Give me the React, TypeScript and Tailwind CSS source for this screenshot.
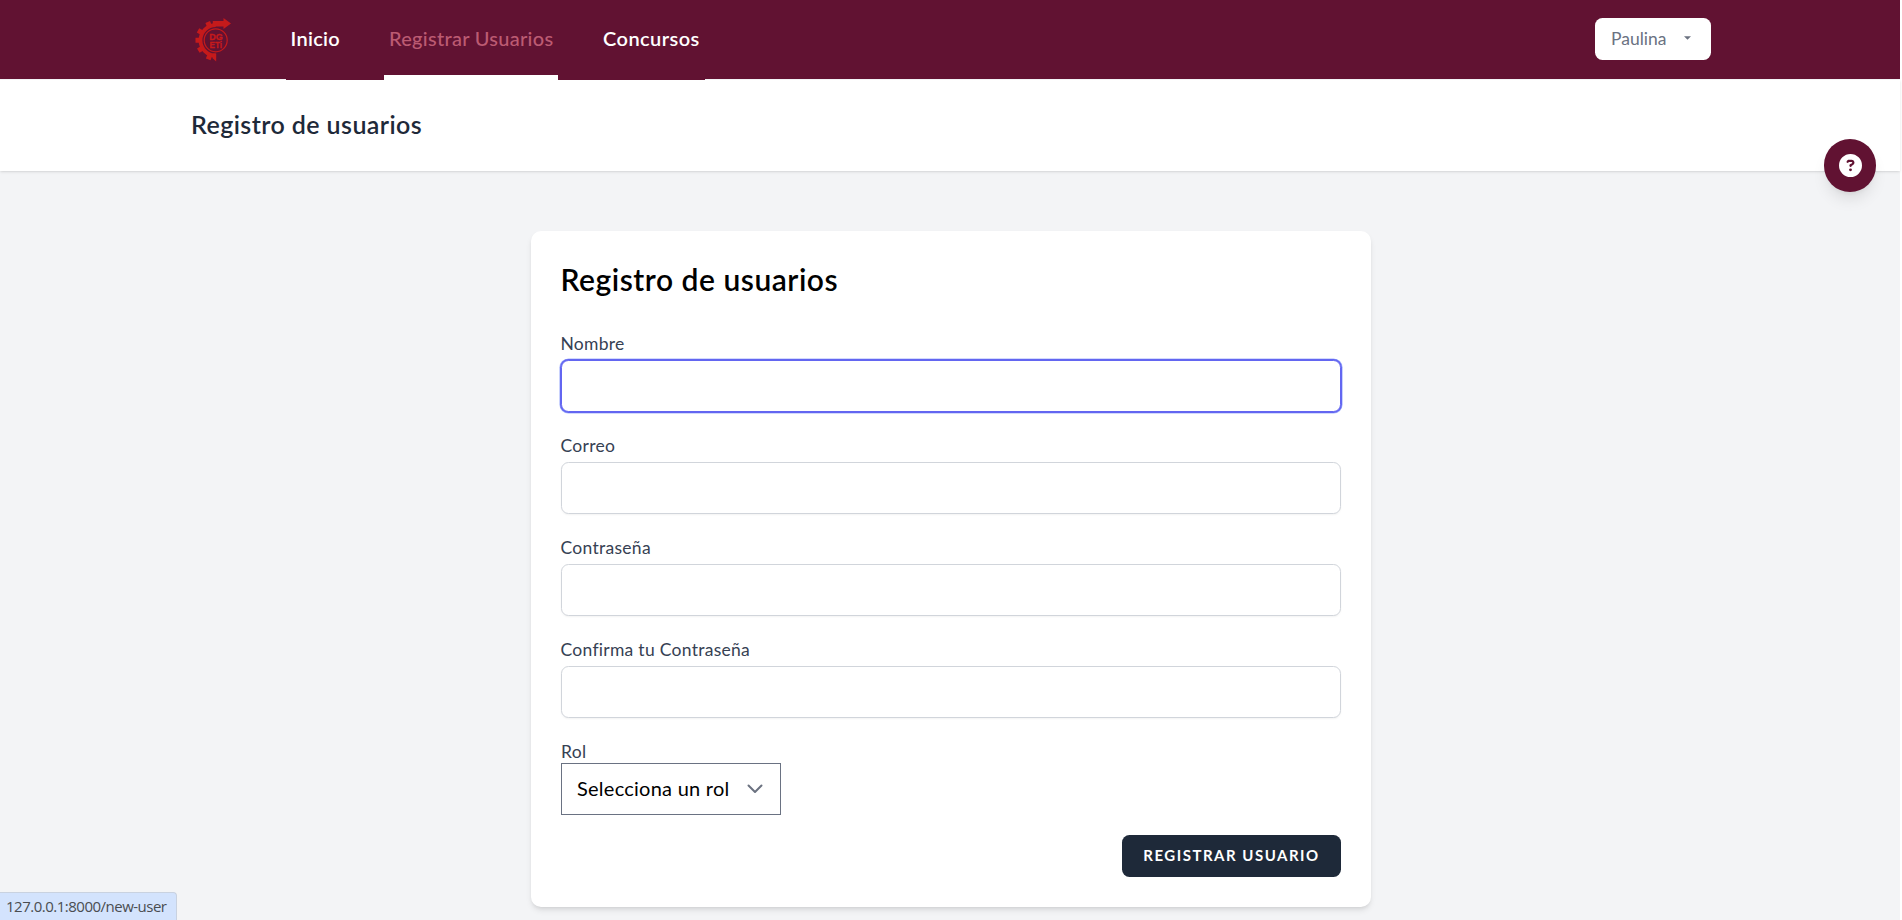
import React from 'react';

function Logo() {
  return (
    <svg width="37" height="44" viewBox="0 0 37 44" className="block">
      <g fill="none" stroke="#c51a1b">
        <path d="M20.700 7.100A15.200 15.200 0 0 0 20.700 37.500" strokeWidth="3.800" />
        <path
          d="M6.700 22.300H.5M8.500 15.500L3 12.400M15 9.500L12.700 4M8.700 29.500L3.300 32.700M15.500 35.500L13.200 41.300"
          strokeWidth="5"
        />
        <circle cx="20.700" cy="22.300" r="11.500" strokeWidth="1.200" />
      </g>
      <g fill="#c51a1b">
        <path d="M17.800 3h10.700V0L36 5.500L28.500 11V8.500H17.800Z" />
        <path d="M17.500 35.500h3.700v8l-3.700-3.300Z" />
      </g>
      <g className="font-['Liberation_Sans',sans-serif]" fontWeight="700" fill="#c51a1b" stroke="#c51a1b" strokeWidth="0.300">
        <text x="14.200" y="21.600" fontSize="9.800" textLength="13.500" lengthAdjust="spacingAndGlyphs">DG</text>
        <text x="14.600" y="30" fontSize="8.500" textLength="12.500" lengthAdjust="spacingAndGlyphs">ETi</text>
      </g>
    </svg>
  );
}

function Field({ label, focused = false }: { label: string; focused?: boolean }) {
  return (
    <div className="mb-5 flex flex-col">
      <label className="-ml-[0.5px] h-[30px] pt-px text-[17.5px] leading-[25px] tracking-[0.28px] text-gray-700">{label}</label>
      <input
        type="text"
        className={
          focused
            ? 'h-[52px] w-full rounded-[7.5px] border border-[#6366f1] bg-white px-4 shadow-[0_0_0_1px_#6366f1,0_0_0_1.6px_#a5b4fc] outline-none'
            : 'h-[52px] w-full rounded-[7.5px] border border-[#d1d5db] bg-white px-4 shadow-[0_1px_2px_rgba(0,0,0,0.05)] outline-none'
        }
      />
    </div>
  );
}

export default function App() {
  return (
    <div className="h-[920px] overflow-hidden bg-white pr-[2px] font-['Lato','Open_Sans',sans-serif]">
      <div className="flex h-full flex-col bg-[#f3f4f6]">
        <nav className="relative flex h-20 shrink-0 border-b border-[#f3f4f6] bg-[#611232] pr-[189px] pl-[195px]">
          <div className="mr-[54px] pt-[18px]">
            <Logo />
          </div>
          <div className="flex h-20 gap-[40px] bg-[#611232] text-[20px] leading-[25px] font-medium text-white">
            <a className="w-[58px] border-b-[5px] border-transparent px-[4.5px] pt-[26px] font-semibold tracking-[0.3px]">Inicio</a>
            <a className="w-[174px] border-b-[5px] border-white px-[5px] pt-[26px] tracking-[0.28px] text-[#bc5b72]">
              <span className="whitespace-nowrap">Registrar Usuarios</span>
            </a>
            <a className="w-[107px] border-b-[5px] border-transparent px-[5px] pt-[26px] font-semibold tracking-[0.45px]">Concursos</a>
          </div>
          <button className="mt-[18px] ml-auto flex h-[42px] w-[116px] items-center rounded-[7.5px] bg-white pl-4 text-[17.5px] text-gray-500">
            Paulina
            <svg viewBox="0 0 8 4" className="-mt-[3px] ml-[18px] h-[4px] w-[7px]">
              <path d="M0 0H8L4 4Z" fill="#6b7280" />
            </svg>
          </button>
        </nav>
        <header className="h-[91px] shrink-0 bg-white pt-[29px] pl-[191px] text-[25px] leading-[30px] font-semibold tracking-[0.42px] text-gray-800 shadow">
          <h2>Registro de usuarios</h2>
        </header>
        <main className="flex justify-center pt-[60px] pl-[2px]">
          <section className="h-[676px] w-[840px] rounded-[10px] bg-white px-[30px] shadow-md">
            <h1 className="-ml-[0.5px] h-[99px] pt-[30px] text-[30px] leading-[37.5px] font-semibold tracking-[0.52px] text-black">Registro de usuarios</h1>
            <form>
              <Field label="Nombre" focused />
              <Field label="Correo" />
              <Field label="Contraseña" />
              <Field label="Confirma tu Contraseña" />
              <label className="block h-[25px] pt-px text-[17.5px] leading-[25px] tracking-[0.3px] text-gray-700">Rol</label>
              <div className="flex h-[52px] w-[220px] items-center justify-between border border-gray-500 bg-white pr-[17px] pl-[15px] text-[20px] text-black">
                <span className="-mt-[2px] tracking-[0.25px]">Selecciona un rol</span>
                <svg viewBox="0 0 16 10" className="h-[10px] w-4" fill="none">
                  <path d="M1.500 1.500L8 8l6.500-6.500" stroke="#6b7280" strokeWidth="2" strokeLinecap="round" strokeLinejoin="round" />
                </svg>
              </div>
              <div className="mt-5 flex justify-end">
                <button type="button" className="h-[42px] w-[219px] rounded-[7.5px] bg-gray-800 pb-px text-[15px] font-bold tracking-[1.5px] text-white">
                  REGISTRAR USUARIO
                </button>
              </div>
            </form>
          </section>
        </main>
      </div>
      <button className="fixed top-[139px] left-[1824px] flex h-[53px] w-[52px] items-center justify-center rounded-full bg-[#611232] shadow-lg">
        <svg viewBox="0 0 512 512" className="-mt-px size-[23px]" fill="white">
          <path d="M256 512A256 256 0 1 0 256 0a256 256 0 1 0 0 512zM169.800 165.300c7.900-22.300 29.100-37.300 52.800-37.300h58.300c34.900 0 63.100 28.300 63.100 63.100 0 22.600-12.100 43.500-31.700 54.800L280 264.400c-.2 13-10.900 23.600-24 23.600-13.300 0-24-10.700-24-24v-13.500c0-8.600 4.600-16.500 12.100-20.800l44.300-25.400c4.700-2.700 7.600-7.700 7.600-13.100 0-8.400-6.800-15.100-15.100-15.100h-58.300c-3.400 0-6.400 2.100-7.500 5.300l-.4 1.200c-4.400 12.500-18.200 19-30.600 14.600s-19-18.200-14.600-30.600l.4-1.200zM224 352a32 32 0 1 1 64 0 32 32 0 1 1-64 0z" />
        </svg>
      </button>
      <div className="fixed bottom-0 left-0 h-[28px] w-[177px] rounded-tr-[4px] border-t border-r border-[#c9d2e0] bg-[#d3e3fd] pl-[6px] font-['Open_Sans','Noto_Sans',sans-serif] text-[15px] leading-[26px] tracking-[-0.5px] text-[#4a4d51]">
        <span className="whitespace-nowrap">127.0.0.1:8000/new-user</span>
      </div>
    </div>
  );
}
